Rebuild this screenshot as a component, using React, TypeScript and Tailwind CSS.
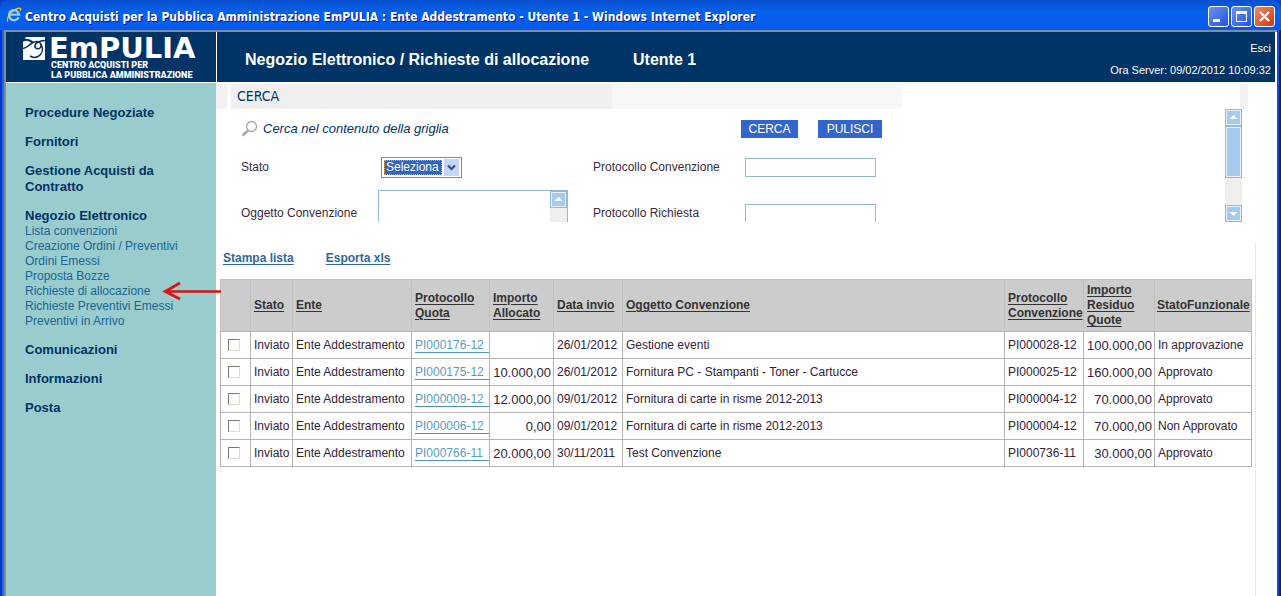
import React from "react";

interface MenuSection {
    title: string;
    items?: string[];
}

interface Richiesta {
    quota: string;
    allocato: string;
    data: string;
    oggetto: string;
    convenzione: string;
    residuo: string;
    stato: string;
}

const MENU: MenuSection[] = [
    { title: "Procedure Negoziate" },
    { title: "Fornitori" },
    { title: "Gestione Acquisti da Contratto" },
    {
        title: "Negozio Elettronico",
        items: [
            "Lista convenzioni",
            "Creazione Ordini / Preventivi",
            "Ordini Emessi",
            "Proposta Bozze",
            "Richieste di allocazione",
            "Richieste Preventivi Emessi",
            "Preventivi in Arrivo",
        ],
    },
    { title: "Comunicazioni" },
    { title: "Informazioni" },
    { title: "Posta" },
];

const ACTIVE_ITEM = "Richieste di allocazione";

const RICHIESTE: Richiesta[] = [
    { quota: "PI000176-12", allocato: "", data: "26/01/2012", oggetto: "Gestione eventi", convenzione: "PI000028-12", residuo: "100.000,00", stato: "In approvazione" },
    { quota: "PI000175-12", allocato: "10.000,00", data: "26/01/2012", oggetto: "Fornitura PC - Stampanti - Toner - Cartucce", convenzione: "PI000025-12", residuo: "160.000,00", stato: "Approvato" },
    { quota: "PI000009-12", allocato: "12.000,00", data: "09/01/2012", oggetto: "Fornitura di carte in risme 2012-2013", convenzione: "PI000004-12", residuo: "70.000,00", stato: "Approvato" },
    { quota: "PI000006-12", allocato: "0,00", data: "09/01/2012", oggetto: "Fornitura di carte in risme 2012-2013", convenzione: "PI000004-12", residuo: "70.000,00", stato: "Non Approvato" },
    { quota: "PI000766-11", allocato: "20.000,00", data: "30/11/2011", oggetto: "Test Convenzione", convenzione: "PI000736-11", residuo: "30.000,00", stato: "Approvato" },
];

const HEADINGS = [
    "Stato",
    "Ente",
    "Protocollo Quota",
    "Importo Allocato",
    "Data invio",
    "Oggetto Convenzione",
    "Protocollo Convenzione",
    "Importo Residuo Quote",
    "StatoFunzionale",
];

const BrowserIcon = () => (
    <svg viewBox="0 0 16 16" className="w-4 h-4 shrink-0" fill="none">
        <path d="M12.6 10.2A5 5 0 1 1 13 7.6H4.4" stroke="#8fd0f8" strokeWidth="2.4" />
        <path d="M2 14.5C-.5 12 5 3.500 12 1.300c2.400-.7 3.200.5 2.400 2.400" stroke="#f0c850" strokeWidth="1.300" />
    </svg>
);

const LogoMark = () => (
    <svg viewBox="0 0 22 23" className="w-[22px] h-[23px] shrink-0" fill="none">
        <path d="M3 0h19v23H0V5z" fill="#fff" />
        <path d="M0 3.500C4 1.500 7 3 10 5.500" stroke="#003366" strokeWidth="2" />
        <path d="M0 11.500c4-.5 6-3.500 9-5.500 4-2.500 8-2 9 1.500.8 3-2 5-4.500 4-2.500-1.200-2-4.500 1-6C17 4 20 3.500 22 3.500" stroke="#003366" strokeWidth="1.600" />
        <path d="M18 7c2.500 5 1.500 10-3 12.500-2.500 1.300-5.500 1-8-.5" stroke="#003366" strokeWidth="1.500" />
    </svg>
);

const TitleBar = () => (
    <div className="flex items-center h-[30px] pl-[6px] pr-[6px] rounded-t-lg bg-linear-to-b from-[#0a4fd0] via-[#0562e8] via-40% to-[#0458f0]">
        <BrowserIcon />
        <h1 className="flex-1 pl-[3px] pt-[3px] font-['DejaVu_Sans_Condensed','DejaVu_Sans',sans-serif] text-[12px] font-bold text-white whitespace-nowrap [text-shadow:1px_1px_0_#0a1883]">
            Centro Acquisti per la Pubblica Amministrazione EmPULIA : Ente Addestramento - Utente 1 - Windows Internet Explorer
        </h1>
        <div className="flex gap-[2px] pt-[3px]">
            <button aria-label="Riduci a icona" className="w-[21px] h-[21px] rounded-[3px] border border-white bg-linear-to-br from-[#6f92f0] to-[#2450d8]">
                <svg viewBox="0 0 19 19" className="w-full h-full"><path d="M4 12h7v3H4z" fill="#fff" /></svg>
            </button>
            <button aria-label="Ingrandisci" className="w-[21px] h-[21px] rounded-[3px] border border-white bg-linear-to-br from-[#6f92f0] to-[#2450d8]">
                <svg viewBox="0 0 19 19" className="w-full h-full" fill="none">
                    <path d="M4.500 5.500h10v9h-10z" stroke="#fff" />
                    <path d="M4 4h11v3H4z" fill="#fff" />
                </svg>
            </button>
            <button aria-label="Chiudi" className="w-[21px] h-[21px] rounded-[3px] border border-white bg-linear-to-br from-[#ee8a6a] to-[#c83410]">
                <svg viewBox="0 0 19 19" className="w-full h-full"><path d="M5 5l9 9M14 5l-9 9" stroke="#fff" strokeWidth="2.200" /></svg>
            </button>
        </div>
    </div>
);

const PageHeader = () => (
    <header className="flex h-[51px] border-b border-white bg-[#003366] text-white">
        <div className="flex w-[211px] shrink-0 border-r border-white pl-[17px] pt-[5px] gap-[4px]">
            <LogoMark />
            <div>
                <div className="font-['DejaVu_Sans',sans-serif] text-[29px] leading-[23px] font-bold">EmPULIA</div>
                <div className="pl-[2px] font-[Roboto,sans-serif] text-[9px] leading-[10px] font-black whitespace-nowrap">
                    CENTRO ACQUISTI PER
                    <br />
                    LA PUBBLICA AMMINISTRAZIONE
                </div>
            </div>
        </div>
        <div className="flex flex-1 items-center gap-11 pl-7 pt-[5px] text-[16px] font-bold">
            <h2>Negozio Elettronico / Richieste di allocazione</h2>
            <span>Utente 1</span>
        </div>
        <div className="flex flex-col items-end pt-2 pr-1 text-[11px] leading-4">
            <a href="#esci">Esci</a>
            <span className="pt-[6px]">Ora Server: 09/02/2012 10:09:32</span>
        </div>
    </header>
);

const Sidebar = () => (
    <nav className="w-[210px] shrink-0 bg-[#99cccc] pl-[19px] pt-[22px] text-[#003366]">
        {MENU.map((section) => (
            <section key={section.title} className="mb-[13px]">
                <a href="#menu" className="block w-[150px] text-[13px] leading-4 font-bold">{section.title}</a>
                {section.items && (
                    <ul className="text-[12px] leading-[15px] text-[#1a6496] whitespace-nowrap">
                        {section.items.map((item) => (
                            <li key={item} className="relative">
                                <a href="#menu">{item}</a>
                                {item === ACTIVE_ITEM && (
                                    <svg viewBox="0 0 60 20" className="absolute left-[137px] -top-[3px] z-10 w-[60px] h-5" fill="none">
                                        <path d="M3 10.500h56M18 2L3 10.500l15 7.500" stroke="#dd1111" strokeWidth="2.600" />
                                    </svg>
                                )}
                            </li>
                        ))}
                    </ul>
                )}
            </section>
        ))}
    </nav>
);

const ScrollArrow = ({ down, label }: { down?: boolean; label: string }) => (
    <button type="button" aria-label={label} className="block w-[17px] h-[17px] shrink-0 border border-[#8fbbe0] bg-[#a6caf0]">
        <svg viewBox="0 0 15 15" className="w-full h-full">
            <path d="M.5.500h14v14H.500z" fill="none" stroke="#e8f2fc" />
            <path d={down ? "M3.500 6h8L7.500 10z" : "M3.500 9h8L7.500 5z"} fill="#fff" />
        </svg>
    </button>
);

const SearchForm = () => (
    <form className="flex h-[113px] overflow-hidden pr-[33px] text-[12px] text-[#3a2a40]">
        <div className="flex-1 pl-[25px]">
            <div className="flex items-center h-[39px]">
                <div className="flex items-center w-[500px] gap-[5px] text-[13px] italic text-[#003366]">
                    <svg viewBox="0 0 17 17" className="w-[17px] h-[17px]" fill="none">
                        <circle cx="10.500" cy="6.500" r="5" stroke="#a8a8a8" strokeWidth="1.300" />
                        <path d="M7 10.500L1.500 15.500" stroke="#a8a8a8" strokeWidth="2.400" />
                    </svg>
                    Cerca nel contenuto della griglia
                </div>
                <button type="button" className="w-[57px] h-[18px] bg-[#3366cc] text-white">CERCA</button>
                <button type="button" className="ml-5 w-[64px] h-[18px] bg-[#3366cc] text-white">PULISCI</button>
            </div>
            <div className="flex items-center h-[38px]">
                <label htmlFor="stato" className="w-[140px]">Stato</label>
                <div className="w-[212px]">
                    <div className="flex w-[81px] h-[21px] items-center justify-between border border-[#5f95b5] bg-white p-[2px]">
                        <select id="stato" className="w-[58px] h-[15px] appearance-none bg-[#3366b8] px-[2px] text-[12px] leading-[13px] text-white outline-1 -outline-offset-1 outline-dotted outline-[#d8a868]">
                            <option>Seleziona</option>
                        </select>
                        <svg viewBox="0 0 15 17" className="w-[15px] h-[17px] bg-[#c4d4fb]" fill="none">
                            <path d="M4 6.500l3.500 3.500L11 6.500" stroke="#33507f" strokeWidth="2.200" />
                        </svg>
                    </div>
                </div>
                <label htmlFor="protConv" className="w-[152px]">Protocollo Convenzione</label>
                <input id="protConv" type="text" className="w-[131px] h-[19px] border border-[#8fbcb8] px-1" />
            </div>
            <div className="flex items-center h-[54px]">
                <label htmlFor="oggetto" className="w-[137px]">Oggetto Convenzione</label>
                <div className="w-[215px]">
                    <div className="flex w-[190px] h-[46px] border border-[#8fbccc]">
                        <textarea id="oggetto" className="flex-1 min-w-0 resize-none overflow-hidden px-1" />
                        <div className="w-[17px] bg-[#efefef]">
                            <ScrollArrow label="Scorri testo in su" />
                        </div>
                    </div>
                </div>
                <label htmlFor="protRich" className="w-[152px]">Protocollo Richiesta</label>
                <input id="protRich" type="text" className="w-[131px] h-[19px] border border-[#8fbcb8] px-1" />
            </div>
        </div>
        <div className="flex flex-col w-[17px] bg-[#efefef]">
            <ScrollArrow label="Scorri in su" />
            <div className="h-[52px] border border-[#8fbbe0] bg-[#a6caf0]">
                <div className="h-full border border-[#e8f2fc]" />
            </div>
            <div className="flex-1" />
            <ScrollArrow down label="Scorri in giù" />
        </div>
    </form>
);

const RichiesteTable = () => (
    <table className="w-full table-fixed border-collapse text-left text-[12px] leading-[15px] text-[#33223a]">
        <colgroup>
            <col className="w-[30px]" />
            <col className="w-[42px]" />
            <col className="w-[119px]" />
            <col className="w-[78px]" />
            <col className="w-[64px]" />
            <col className="w-[69px]" />
            <col />
            <col className="w-[79px]" />
            <col className="w-[71px]" />
            <col className="w-[97px]" />
        </colgroup>
        <thead>
            <tr className="h-[52px] bg-[#cccccc] text-[#333333]">
                <th className="border border-[#c0c0c0] border-b-[#b4b4b4]" />
                {HEADINGS.map((heading) => (
                    <th key={heading} className="border border-[#c0c0c0] border-b-[#b4b4b4] pl-[3px] last:pl-[2px]">
                        <a href="#ordina" className="underline underline-offset-2">{heading}</a>
                    </th>
                ))}
            </tr>
        </thead>
        <tbody>
            {RICHIESTE.map((r) => (
                <tr key={r.quota} className="h-[27px] whitespace-nowrap">
                    <td className="border border-[#b4b4b4] pl-[7px]">
                        <input
                            type="checkbox"
                            aria-label={`Seleziona ${r.quota}`}
                            className="block w-3 h-3 appearance-none border border-t-[#77776a] border-l-[#77776a] border-r-[#dedbd2] border-b-[#dedbd2] bg-white checked:bg-[#3366cc]"
                        />
                    </td>
                    <td className="border border-[#b4b4b4] pl-[3px]">Inviato</td>
                    <td className="border border-[#b4b4b4] pl-[3px]">Ente Addestramento</td>
                    <td className="border border-[#b4b4b4] pl-[3px]">
                        <a href="#quota" className="block border-b border-[#4f92b8] leading-[14px] text-[#5b9bc0]">{r.quota}</a>
                    </td>
                    <td className="border border-[#b4b4b4] pr-[2px] text-right text-[13px]">{r.allocato}</td>
                    <td className="border border-[#b4b4b4] pl-[3px]">{r.data}</td>
                    <td className="border border-[#b4b4b4] pl-[3px]">{r.oggetto}</td>
                    <td className="border border-[#b4b4b4] pl-[3px]">{r.convenzione}</td>
                    <td className="border border-[#b4b4b4] pr-[2px] text-right text-[13px]">{r.residuo}</td>
                    <td className="border border-[#b4b4b4] pl-[3px]">{r.stato}</td>
                </tr>
            ))}
        </tbody>
    </table>
);

export default function App() {
    return (
        <div className="flex flex-col min-h-screen bg-[#0440d0] font-['Liberation_Sans',Arial,sans-serif]">
            <TitleBar />
            <div className="flex flex-1 border-l-2 border-[#0038d0] border-r-2 border-r-[#001a90]">
                <div className="w-[2px] bg-[#1a6ae8]" />
                <div className="flex flex-col flex-1 min-w-0 border-l-2 border-t-2 border-[#8a8a90] bg-white pr-[2px]">
                    <PageHeader />
                    <div className="flex flex-1">
                        <Sidebar />
                        <main className="flex flex-col flex-1 min-w-0 pt-px">
                            {/* Search heading */}
                            <div className="flex h-[25px] pr-[27px]">
                                <div className="w-[11px] bg-[#f2f2f2]" />
                                <h3 className="ml-1 w-[381px] bg-[#efefef] pl-[6px] font-['DejaVu_Sans_Condensed','DejaVu_Sans',sans-serif] text-[14px] leading-6 text-[#003366]">
                                    CERCA
                                </h3>
                                <div className="w-[290px] bg-[#f7f7f7]" />
                                <div className="flex-1" />
                                <div className="w-2 bg-[#f2f2f2]" />
                            </div>
                            <SearchForm />
                            {/* Results grid */}
                            <div className="flex-1 mt-5 mr-[19px] border-r border-[#e6e6e6] pl-1 pr-[3px]">
                                <div className="flex gap-8 h-[37px] pl-[3px] pt-2 text-[12px] leading-4 font-bold text-[#336699]">
                                    <a href="#stampa" className="underline underline-offset-2">Stampa lista</a>
                                    <a href="#esporta" className="underline underline-offset-2">Esporta xls</a>
                                </div>
                                <RichiesteTable />
                            </div>
                        </main>
                    </div>
                </div>
                <div className="w-[2px] bg-[#0850d8]" />
            </div>
        </div>
    );
}
